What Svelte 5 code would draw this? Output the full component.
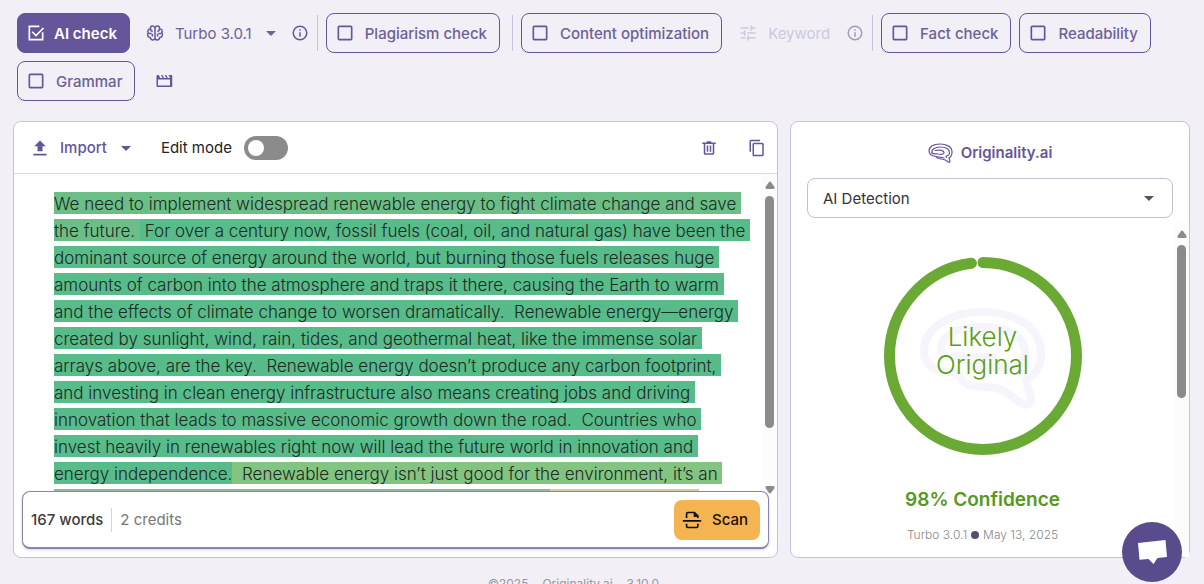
<script lang="ts">
  let checks = $state({
    ai: true,
    plagiarism: false,
    content: false,
    fact: false,
    readability: false,
    grammar: false
  });
  let editMode = $state(false);
  let report = $state('AI Detection');

  const confidence = 98;

  const segments = [
    {
      tone: 'tone-2',
      text: 'We need to implement widespread renewable energy to fight climate change and save \nthe future. '
    },
    {
      tone: 'tone-1',
      text: ' For over a century now, fossil fuels (coal, oil, and natural gas) have been the \ndominant source of energy around the world, but burning those fuels releases huge \namounts of carbon into the atmosphere and traps it there, causing the Earth to warm \nand the effects of climate change to worsen dramatically.  Renewable energy—energy \ncreated by sunlight, wind, rain, tides, and geothermal heat, like the immense solar \narrays above, are the key.  Renewable energy doesn’t produce any carbon footprint, \nand investing in clean energy infrastructure also means creating jobs and driving \ninnovation that leads to massive economic growth down the road.  Countries who \ninvest heavily in renewables right now will lead the future world in innovation and \nenergy independence.'
    },
    {
      tone: 'tone-3',
      text: '  Renewable energy isn’t just good for the environment, it’s an \n'
    },
    { tone: 'tone-4', text: 'investment in our communities and in the generations after us. ' },
    { tone: 'tone-5', text: ' We all have to act ' }
  ];
</script>

{#snippet info()}
  <svg class="info" viewBox="0 0 24 24" aria-hidden="true">
    <path d="M11 7h2v2h-2zm0 4h2v6h-2zm1-9a10 10 0 1 0 0 20 10 10 0 0 0 0-20m0 18a8 8 0 1 1 0-16 8 8 0 0 1 0 16" />
  </svg>
{/snippet}

{#snippet caret()}
  <svg class="caret" viewBox="0 0 24 24" aria-hidden="true"><path d="m7 10 5 5 5-5z" /></svg>
{/snippet}

{#snippet check(key: keyof typeof checks, text: string)}
  <label class="check" class:on={checks[key]}>
    <input type="checkbox" bind:checked={checks[key]} />
    <svg class="line" viewBox="0 0 24 24" aria-hidden="true">
      {#if checks[key]}
        <path d="M20 11v9H4V4h12" />
        <path d="m7.5 10.5 4.5 4.5 9-9" />
      {:else}
        <rect x="4" y="4" width="16" height="16" rx="1" />
      {/if}
    </svg>
    {text}
  </label>
{/snippet}

<div class="page">
  <div class="toolbar">
    {@render check('ai', 'AI check')}
    <button type="button" class="plain model">
      <svg class="brain line" viewBox="0 0 24 24" aria-hidden="true">
        <path d="M12 4v16M12 5C10 1 5.5 2.5 6 6 3 6.5 1.5 9 3 11.5 1 14 2.5 18 5.5 18 6.5 22 11 22.5 12 19" />
        <path d="M12 5c2-4 6.500-2.500 6 1 3 .5 4.500 3 3 5.500 2 2.500.5 6.500-2.500 6.500-1 4-5.500 4.500-6.500 1" />
        <path d="M6 6.500c0 2 1 3 3 3M3.500 12.500h4M8.500 13v3.500M18 6.500c0 2-1 3-3 3M20.500 12.500h-4M15.500 13v3.500" />
      </svg>
      Turbo 3.0.1
      {@render caret()}
    </button>
    {@render info()}
    <span class="divider"></span>
    {@render check('plagiarism', 'Plagiarism check')}
    <span class="divider spaced"></span>
    {@render check('content', 'Content optimization')}
    <button type="button" class="plain keyword" disabled>
      <svg viewBox="0 0 24 24" aria-hidden="true">
        <path d="M3 17v2h6v-2zM3 5v2h10V5zm10 16v-2h8v-2h-8v-2h-2v6zM7 9v2H3v2h4v2h2V9zm14 4v-2H11v2zm-6-4h2V7h4V5h-4V3h-2z" />
      </svg>
      Keyword
    </button>
    <span class="faded">{@render info()}</span>
    <span class="divider"></span>
    {@render check('fact', 'Fact check')}
    {@render check('readability', 'Readability')}
    {@render check('grammar', 'Grammar')}
    <button type="button" class="plain clip" aria-label="Watch the tutorial">
      <svg viewBox="0 0 24 24" aria-hidden="true">
        <path d="M3 4h2l2 4h3L8 4h2l2 4h3l-2-4h2l2 4h3l-2-4h4a2 2 0 0 1 1 1v14a1 1 0 0 1-1 1H3a1 1 0 0 1-1-1V5a1 1 0 0 1 1-1m1 6v8h16v-8z" />
      </svg>
    </button>
  </div>

  <main>
    <section class="panel editor">
      <div class="editor-bar">
        <button type="button" class="plain import">
          <svg viewBox="0 0 24 24" aria-hidden="true"><path d="M9 16h6v-6h4l-7-7-7 7h4zm-5 3h16v2H4z" /></svg>
          Import
          {@render caret()}
        </button>
        <label class="switch">
          Edit mode
          <input type="checkbox" role="switch" bind:checked={editMode} />
        </label>
        <div class="tools">
          <button type="button" class="plain" aria-label="Delete">
            <svg viewBox="0 0 24 24" aria-hidden="true">
              <path d="M9 3h6v2H9zM3 4.500h18v2H3zM5 6h2v13h10V6h2v13a2 2 0 0 1-2 2H7a2 2 0 0 1-2-2zM9 8.500h2V17H9zm4 0h2V17h-2z" />
            </svg>
          </button>
          <button type="button" class="plain" aria-label="Copy">
            <svg viewBox="0 0 24 24" aria-hidden="true">
              <path d="M16 1H4a2 2 0 0 0-2 2v14h2V3h12zm3 4H8a2 2 0 0 0-2 2v14c0 1.100.9 2 2 2h11a2 2 0 0 0 2-2V7a2 2 0 0 0-2-2m0 16H8V7h11z" />
            </svg>
          </button>
        </div>
      </div>

      <div class="editor-body">
        <p class="content">{#each segments as s}<span class={s.tone}>{s.text}</span>{/each}</p>
        <div class="scrollbar">
          <svg class="up" viewBox="0 0 10 8" aria-hidden="true"><path d="M4 1q1-1 2 0l3.500 5q.5 1.500-1 2h-7q-1.500-.5-1-2z" /></svg>
          <div class="track"><div class="thumb text-thumb"></div></div>
          <svg class="down" viewBox="0 0 10 8" aria-hidden="true"><path d="M4 7q1 1 2 0l3.500-5q.5-1.500-1-2h-7Q0 .5.500 2z" /></svg>
        </div>
      </div>

      <div class="scan-bar">
        <span class="words">167 words</span>
        <span class="credits">2 credits</span>
        <button type="button" class="scan">
          <svg viewBox="0 0 24 24" aria-hidden="true">
            <path d="M5.500 9.500V4.500a1.500 1.500 0 0 1 1.500-1.500h8l4 4v2.500M5.500 16.500v3A1.500 1.500 0 0 0 7 21h10.500a1.500 1.500 0 0 0 1.500-1.500v-3M1 13h22" fill="none" stroke="currentColor" stroke-width="2" />
            <path d="M14 2.500v6h6z" />
          </svg>
          Scan
        </button>
      </div>
    </section>

    <section class="panel results">
      <h2>
        <svg class="logo line" viewBox="0 0 25 20" aria-hidden="true">
          <path d="M1 8C1 3 6 1 12 1c7 0 12 3 12 8 0 3-1 5-3 6l1 3.500c0 .8-.8 1-1.500.5-4-3.500-6-2.500-10-3.500-1.500-.5-2-1-2.500-2C4 13 1 12 1 8z" />
          <path d="M4 10c-1-3.500 3-6 8-6 6 0 9.500 2 9.500 5.500 0 2.500-1.500 3.500-3.500 3.500l.5 1.500" />
          <path d="M4 10c1.500 1.500 3.500.5 6 1 3 .7 6 .5 6-1.500S12 6.500 7 7.500" />
          <path d="M8 13.500c3 .8 5 .3 8 1.500" />
        </svg>
        Originality.ai
      </h2>

      <div class="select">
        <select bind:value={report} aria-label="Report">
          <option>AI Detection</option>
          <option>Readability</option>
        </select>
        {@render caret()}
      </div>

      <div class="result-body">
        <div class="score">
          <div class="ring">
            <svg class="arc" viewBox="0 0 198 198" aria-hidden="true">
              <circle cx="99" cy="99" r="93.5" pathLength="100" stroke-dasharray="{confidence} {100 - confidence}" />
            </svg>
            <svg class="mark" viewBox="0 0 125 101" aria-hidden="true">
              <path d="M4 44C4 18 32 4 63 4c35 0 58 17 58 41 0 13-5 22-15 27l5 18c1 7-5 8-10 5-14-10-19-15-31-16-20 0-28-2-32-14C16 64 4 59 4 44z" />
              <path d="M21 44C19 27 38 19 62 19c26 0 43 9 43 25 0 10-6 15-14 15H54c-8 0-7-10 0-10h18" />
              <path d="M21 44c6 7 12 4 22 4" />
            </svg>
            <p class="verdict">Likely<br />Original</p>
          </div>
          <p class="confidence">{confidence}% Confidence</p>
          <p class="meta">Turbo 3.0.1 <span class="dot"></span> May 13, 2025</p>
        </div>
        <div class="scrollbar">
          <svg class="up" viewBox="0 0 10 8" aria-hidden="true"><path d="M4 1q1-1 2 0l3.500 5q.5 1.500-1 2h-7q-1.500-.5-1-2z" /></svg>
          <div class="track"><div class="thumb result-thumb"></div></div>
        </div>
      </div>
    </section>
  </main>

  <footer>
    <span>©2025</span>
    <span>Originality.ai</span>
    <span>3.10.0</span>
  </footer>

  <button type="button" class="chat" aria-label="Open chat">
    <svg viewBox="0 0 30 26" aria-hidden="true"><path d="M1 4 28.500 1 30 18l-9.500 1-4 6-5-5-9 .8z" /></svg>
  </button>
</div>

<style>
  :global(body) {
    margin: 0;
    background: #f2eff7;
  }

  .page {
    display: flex;
    flex-direction: column;
    height: 100vh;
    overflow: hidden;
    font-family: Inter, 'Liberation Sans', sans-serif;
    font-size: 15px;
    color: #222;
  }

  .page * {
    box-sizing: border-box;
  }

  svg {
    flex: none;
    fill: currentColor;
  }

  svg.line {
    fill: none;
    stroke: currentColor;
    stroke-width: 2;
  }

  button,
  select {
    font: inherit;
    cursor: pointer;
  }

  .toolbar {
    display: flex;
    flex-wrap: wrap;
    align-items: center;
    gap: 8px;
    padding: 13px 17px 20px;
    color: #65559b;
  }

  .check {
    display: flex;
    align-items: center;
    gap: 10px;
    height: 40px;
    padding: 0 12px 0 8px;
    border: 1px solid #65559b;
    border-radius: 8px;
    font-weight: 500;
    color: #6c6295;
    cursor: pointer;
  }

  .check input {
    position: absolute;
    opacity: 0;
    pointer-events: none;
  }

  .check:focus-within {
    outline: 2px solid #b9aee0;
  }

  .check svg {
    width: 20px;
    height: 20px;
    color: #65559b;
  }

  .check.on {
    gap: 8px;
    background: #65559b;
    color: #fff;
    font-weight: 600;
  }

  .check.on svg {
    color: #fff;
  }

  .plain {
    display: flex;
    align-items: center;
    height: 40px;
    padding: 0;
    border: none;
    background: none;
    color: #65559b;
  }

  .model {
    gap: 11px;
    padding-left: 8px;
    color: #6c6295;
  }

  .caret {
    width: 24px;
    height: 24px;
  }

  .model .caret {
    margin-left: -4px;
  }

  .brain {
    width: 18px;
    height: 18px;
    color: #65559b;
  }

  .info {
    display: block;
    width: 18px;
    height: 18px;
  }

  .divider {
    width: 1px;
    height: 36px;
    background: #c9c2df;
  }

  .divider.spaced {
    margin-left: 4px;
  }

  .keyword {
    gap: 10px;
    padding: 0 8px;
    color: #cdc8dd;
    cursor: default;
  }

  .keyword svg {
    width: 20px;
    height: 20px;
  }

  .faded {
    color: #a39dba;
  }

  .clip {
    padding: 0 12px;
  }

  .clip svg {
    width: 18px;
    height: 18px;
  }

  main {
    display: flex;
    flex: 1;
    gap: 12px;
    min-height: 0;
    padding: 0 14px 0 13px;
  }

  .panel {
    display: flex;
    flex-direction: column;
    min-width: 0;
    background: #fff;
    border: 1px solid #c7c1df;
    border-radius: 8px;
  }

  .editor {
    flex: 1;
  }

  .editor-bar {
    display: flex;
    flex: none;
    align-items: center;
    height: 52px;
    padding: 0 11px 0 16px;
    border-bottom: 1px solid #dcd9e6;
  }

  .import {
    gap: 10px;
    font-weight: 500;
  }

  .import svg {
    width: 20px;
    height: 20px;
  }

  .import .caret {
    width: 24px;
    height: 24px;
    margin-left: -3px;
  }

  .switch {
    display: flex;
    align-items: center;
    gap: 12px;
    margin-left: 23px;
  }

  .switch input {
    appearance: none;
    width: 44px;
    height: 24px;
    margin: 0;
    padding: 4px;
    border-radius: 12px;
    background: #8b8b8b;
    cursor: pointer;
  }

  .switch input::before {
    content: '';
    display: block;
    width: 16px;
    height: 16px;
    border-radius: 50%;
    background: #fff;
  }

  .switch input:checked {
    background: #65559b;
  }

  .switch input:checked::before {
    margin-left: 20px;
  }

  .tools {
    display: flex;
    gap: 30px;
    margin-left: auto;
  }

  .tools svg {
    width: 18px;
    height: 18px;
  }

  .editor-body {
    display: flex;
    flex: 1;
    min-height: 0;
  }

  .content {
    flex: 1;
    min-width: 0;
    margin: 0;
    padding: 17px 0 0 40px;
    overflow: hidden;
    font-size: 17px;
    font-weight: 300;
    line-height: 27px;
    color: #1d2b25;
    white-space: pre-wrap;
  }

  .content span {
    padding-top: 2px;
  }

  .tone-1 {
    background: #58bb8a;
  }

  .tone-2 {
    background: #6bbf86;
  }

  .tone-3 {
    background: #83c481;
  }

  .tone-4 {
    background: #87b496;
  }

  .tone-5 {
    background: #d6cb92;
  }

  .scrollbar {
    display: flex;
    flex: none;
    flex-direction: column;
    align-items: center;
    gap: 7px;
    width: 15px;
    padding-top: 7px;
    background: #fcfcfc;
    color: #8b8b8b;
  }

  .scrollbar svg {
    width: 10px;
    height: 8px;
  }

  .scrollbar .down {
    position: relative;
    z-index: 1;
    margin-bottom: -3px;
  }

  .track {
    display: flex;
    flex: 1;
    flex-direction: column;
    min-height: 0;
  }

  .thumb {
    width: 9px;
    border-radius: 5px;
    background: #8b8b8b;
  }

  .text-thumb {
    height: 82%;
  }

  .result-thumb {
    height: 49%;
  }

  .scan-bar {
    display: flex;
    flex: none;
    align-items: center;
    height: 58px;
    margin: 0 8px 8px;
    padding: 0 8px;
    background: #fff;
    border: 1px solid #8a83ab;
    border-bottom-width: 2px;
    border-radius: 8px;
    box-shadow: 0 1px 3px #d5d1e2;
  }

  .words {
    font-weight: 500;
    line-height: 24px;
    color: #3c3c3c;
  }

  .credits {
    margin-left: 8px;
    padding-left: 8px;
    border-left: 1px solid #d4d4d4;
    line-height: 24px;
    color: #777;
  }

  .scan {
    display: flex;
    align-items: center;
    gap: 10px;
    height: 40px;
    margin-left: auto;
    padding: 0 12px 0 8px;
    border: none;
    border-radius: 8px;
    background: #f4b452;
    font-weight: 500;
    color: #16110a;
  }

  .scan svg {
    width: 20px;
    height: 20px;
  }

  .results {
    flex: 0 0 400px;
  }

  h2 {
    display: flex;
    align-items: center;
    justify-content: center;
    gap: 8px;
    margin: 0;
    padding: 20px 0 15px;
    font-size: 15px;
    font-weight: 600;
    line-height: 21px;
    color: #65559b;
  }

  .logo {
    width: 25px;
    height: 20px;
  }

  .logo path {
    stroke-width: 1.2;
    stroke-linecap: round;
    stroke-linejoin: round;
  }

  .select {
    display: flex;
    align-items: center;
    margin: 0 16px;
  }

  .select select {
    appearance: none;
    flex: 1;
    height: 40px;
    padding: 0 40px 0 15px;
    border: 1px solid #c3bfd2;
    border-radius: 8px;
    background: #fff;
    color: #333;
  }

  .select .caret {
    margin: 0 12px 0 -36px;
    color: #555;
    pointer-events: none;
  }

  .result-body {
    display: flex;
    flex: 1;
    min-height: 0;
    margin-top: 5px;
  }

  .score {
    flex: 1;
    text-align: center;
  }

  .ring {
    display: grid;
    place-items: center;
    margin-top: 34px;
  }

  .ring > * {
    grid-area: 1 / 1;
  }

  .arc {
    width: 198px;
    height: 198px;
    transform: rotate(-90deg);
  }

  .arc circle {
    fill: none;
    stroke: #6aa933;
    stroke-width: 11;
    stroke-linecap: round;
  }

  .mark {
    width: 125px;
    height: 101px;
    margin-top: 4px;
  }

  .mark path {
    fill: none;
    stroke: #f6f5fb;
    stroke-width: 8;
    stroke-linecap: round;
    stroke-linejoin: round;
  }

  .verdict {
    margin: 0 0 10px;
    font-size: 26px;
    font-weight: 300;
    line-height: 28px;
    color: #58a01c;
  }

  .confidence {
    margin: 33px 0 0;
    font-size: 19px;
    font-weight: 600;
    line-height: 24px;
    color: #55991e;
  }

  .meta {
    display: flex;
    align-items: center;
    justify-content: center;
    gap: 4px;
    margin: 14px 0 0;
    font-size: 12px;
    font-weight: 300;
    line-height: 18px;
    color: #888;
  }

  .dot {
    width: 8px;
    height: 8px;
    border-radius: 50%;
    background: #56506f;
  }

  footer {
    display: flex;
    flex: none;
    justify-content: center;
    gap: 14px;
    height: 26px;
    padding: 17px 57px 0 0;
    font-size: 12px;
    line-height: 18px;
    color: #99969f;
  }

  .chat {
    position: fixed;
    right: 22px;
    bottom: 2px;
    display: grid;
    place-items: center;
    width: 60px;
    height: 60px;
    border: none;
    border-radius: 50%;
    background: #5a4b8c;
    color: #fff;
  }

  .chat svg {
    width: 30px;
    height: 26px;
  }
</style>
